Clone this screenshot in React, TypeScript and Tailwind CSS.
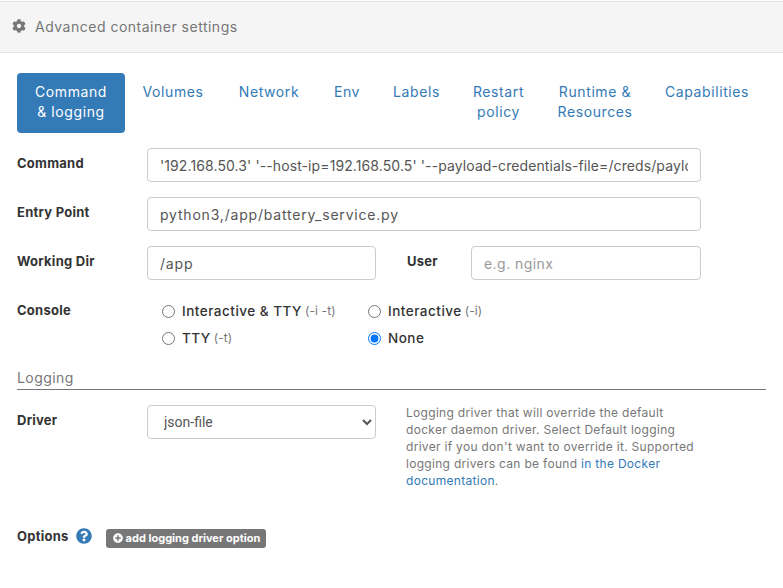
import { FaCog, FaPlusCircle, FaQuestionCircle } from "react-icons/fa";

const tabs = [
  { label: "Command & logging", width: "w-[108px]", active: true },
  { label: "Volumes", width: "w-[96px]" },
  { label: "Network", width: "w-[96px]" },
  { label: "Env", width: "w-[60px]" },
  { label: "Labels", width: "w-[79px]" },
  { label: "Restart policy", width: "w-[85px]" },
  { label: "Runtime & Resources", width: "w-[108px]" },
  { label: "Capabilities", width: "w-[116px]" },
];

const inputClass =
  "h-[34px] shrink-0 rounded border border-[#ccc] bg-white px-3 text-[14px] text-[#555] outline-none placeholder:text-[#999]";

function Label({ children }: { children: React.ReactNode }) {
  return (
    <label className="block text-[13px] leading-[20px] font-bold tracking-[0.25px] whitespace-nowrap text-[#333]">
      {children}
    </label>
  );
}

function Radio({ label, hint, checked }: { label: string; hint: string; checked?: boolean }) {
  return (
    <label className="flex w-[206px] items-center text-[13.5px] font-medium tracking-[0.5px] text-[#333]">
      <input type="radio" name="console" defaultChecked={checked} className="mr-[7px] h-[13px] w-[13px]" />
      {label}
      {hint && <span className="ml-[3px] text-[12px] font-normal tracking-[0.1px] text-[#777]">{hint}</span>}
    </label>
  );
}

export default function App() {
  return (
    <div className="h-[588px] w-[783px] overflow-hidden bg-white pt-px font-['Inter',sans-serif]">
      <div className="flex h-[52px] items-center border-y border-[#e5e5e5] bg-[#f5f5f5] pb-[2px] pl-3 text-[14px] tracking-[0.5px] text-[#767676]">
        <FaCog className="mr-[9px] text-[14px]" />
        Advanced container settings
      </div>

      <div className="px-[17px] pt-5">
        <ul className="flex">
          {tabs.map((tab) => (
            <li key={tab.label} className={tab.width}>
              <a
                className={`block rounded px-[14px] py-[9px] text-center text-[14px] leading-[20px] tracking-[0.6px] ${
                  tab.active ? "h-[60px] bg-[#337ab7] text-white" : "text-[#337ab7]"
                }`}
              >
                {tab.label}
              </a>
            </li>
          ))}
        </ul>

        <div className="mt-[15px] flex flex-col gap-[15px]">
          <div className="flex">
            <div className="w-[130px] shrink-0 pt-[5px]">
              <Label>Command</Label>
            </div>
            <input
              className={`${inputClass} w-[554px] tracking-[0.1px]`}
              readOnly
              value="'192.168.50.3' '--host-ip=192.168.50.5' '--payload-credentials-file=/creds/payload.json'"
            />
          </div>
          <div className="flex">
            <div className="w-[130px] shrink-0 pt-[5px]">
              <Label>Entry Point</Label>
            </div>
            <input
              className={`${inputClass} w-[554px] tracking-[0.8px]`}
              readOnly
              value="python3,/app/battery_service.py"
            />
          </div>
          <div className="flex">
            <div className="w-[130px] shrink-0 pt-[5px]">
              <Label>Working Dir</Label>
            </div>
            <input className={`${inputClass} w-[229px] tracking-[0.8px]`} readOnly value="/app" />
            <div className="w-[95px] shrink-0 pt-[5px] pl-[31px]">
              <Label>User</Label>
            </div>
            <input className={`${inputClass} w-[230px] tracking-[0.45px]`} placeholder="e.g. nginx" />
          </div>
        </div>

        <div className="mt-[20px] flex">
          <div className="w-[145px] shrink-0">
            <Label>Console</Label>
          </div>
          <div className="flex w-[412px] flex-wrap gap-y-[7px] pt-px">
            <Radio label="Interactive & TTY" hint="(-i -t)" />
            <Radio label="Interactive" hint="(-i)" />
            <Radio label="TTY" hint="(-t)" />
            <Radio label="None" hint="" checked />
          </div>
        </div>

        <div className="mt-[19px] w-[749px] border-b border-[#777] pb-px text-[14px] leading-[20px] tracking-[0.45px] text-[#777]">
          Logging
        </div>

        <div className="mt-[15px] flex">
          <div className="w-[130px] shrink-0 pt-[5px]">
            <Label>Driver</Label>
          </div>
          <select className="h-[34px] w-[229px] shrink-0 rounded border border-[#ccc] bg-white px-3 font-['Roboto',sans-serif] text-[14px] text-[#555]">
            <option>json-file</option>
          </select>
          <p className="-mt-px ml-[30px] w-[295px] text-[12px] leading-[17px] tracking-[0.3px] text-[#777]">
            Logging driver that will override the default docker daemon driver. Select Default logging driver if you
            don't want to override it. Supported logging drivers can be found{" "}
            <a className="text-[#337ab7]">in the Docker documentation</a>.
          </p>
        </div>

        <div className="mt-[35px] flex items-center">
          <Label>Options</Label>
          <FaQuestionCircle className="ml-[7px] text-[16px] text-[#337ab7]" />
          <button className="mt-[5px] ml-[14px] flex h-[19px] items-center rounded-[3px] bg-[#777] pr-[6px] pl-[7px] text-[11px] font-bold text-white">
            <FaPlusCircle className="mr-[3px] text-[10px]" />
            add logging driver option
          </button>
        </div>
      </div>
    </div>
  );
}
